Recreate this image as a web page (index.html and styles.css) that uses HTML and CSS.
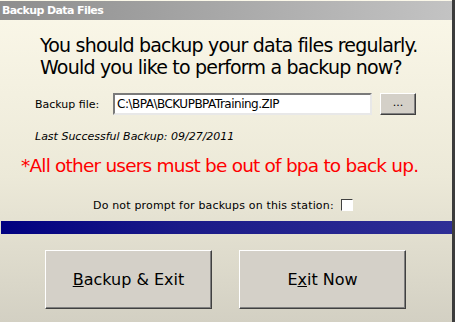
FILE: index.html
```html
<!DOCTYPE html>
<html>
<head>
<meta charset="utf-8">
<link rel="stylesheet" href="styles.css">
</head>
<body>
<div class="window">
  <div class="titlebar">Backup Data Files</div>
  <div class="content">
    <div class="heading">You should backup your data files regularly.<br>Would you like to perform a backup now?</div>
    <div class="file-row">
      <span class="label">Backup file:</span>
      <div class="input">C:\BPA\BCKUPBPATraining.ZIP</div>
      <div class="browse">...</div>
    </div>
    <div class="last">Last Successful Backup: 09/27/2011</div>
    <div class="warning">*All other users must be out of bpa to back up.</div>
    <div class="check-row">
      <span>Do not prompt for backups on this station:</span>
      <span class="checkbox"></span>
    </div>
    <div class="bar"></div>
    <div class="buttons">
      <div class="btn"><span class="u">B</span>ackup &amp; Exit</div>
      <div class="btn">E<span class="u">x</span>it Now</div>
    </div>
  </div>
</div>
</body>
</html>
```
FILE: styles.css
```css
html, body { margin: 0; padding: 0; }
body { width: 455px; height: 322px; overflow: hidden; font-family: "DejaVu Sans", Tahoma, sans-serif; }
.window {
  width: 455px; height: 322px; box-sizing: border-box;
  border-right: 3px solid #3c3c3c;
  display: flex; flex-direction: column;
  background: linear-gradient(to bottom, #fbf8e9 0%, #ece9d8 55%, #d3d0c3 100%);
}
.titlebar {
  height: 19px; margin-top: 1px;
  background: linear-gradient(to right, #8e8e8e, #c3c3c3);
  color: #fff; font-weight: bold; font-size: 11px; letter-spacing: -0.6px;
  line-height: 19px; padding-left: 2px;
}
.content { flex: 1; display: flex; flex-direction: column; }
.heading {
  font-size: 19px; line-height: 22px; color: #000;
  margin: 14px 0 0 40px; letter-spacing: -0.8px;
}
.file-row { display: flex; align-items: center; margin: 15px 0 0 35px; height: 22px; }
.label { font-size: 11px; width: 78px; }
.input {
  width: 259px; height: 22px; box-sizing: border-box; background: #fff;
  border: 2px solid; border-color: #7a7a7a #e8e8e8 #e8e8e8 #7a7a7a;
  font-size: 12px; line-height: 18px; padding-left: 2px; letter-spacing: -0.5px;
}
.browse {
  width: 36px; height: 22px; box-sizing: border-box; margin-left: 8px;
  background: #d4d0c8; border: 1px solid; border-color: #fff #404040 #404040 #fff;
  box-shadow: inset -1px -1px 0 #808080;
  font-size: 11px; text-align: center; line-height: 18px;
}
.last { font-size: 11px; line-height: 14px; font-style: italic; margin: 15px 0 0 35px; }
.warning {
  color: #ff0000; font-size: 18.5px; line-height: 22px;
  margin: 11px 0 0 21px; letter-spacing: -0.8px;
}
.check-row {
  display: flex; align-items: center; height: 12px;
  margin: 22px 0 0 93px; font-size: 11px; gap: 7px; letter-spacing: 0.17px;
}
.checkbox {
  width: 12px; height: 12px; box-sizing: border-box; background: #fff;
  border: 1px solid; border-color: #404040 #fff #fff #404040;
}
.bar {
  height: 13px; margin: 10px 0 0 1px;
  background: linear-gradient(to right, #000080, #1a1a88 40%, #2e2e96);
}
.buttons { display: flex; gap: 27px; margin: 16px 0 0 45px; }
.btn {
  width: 167px; height: 59px; box-sizing: border-box;
  background: #d4d0c8; border: 1px solid; border-color: #fff #404040 #404040 #fff;
  box-shadow: inset -1px -1px 0 #808080;
  display: flex; align-items: center; justify-content: center;
  font-size: 16px;
}
.u { text-decoration: underline; }
```
